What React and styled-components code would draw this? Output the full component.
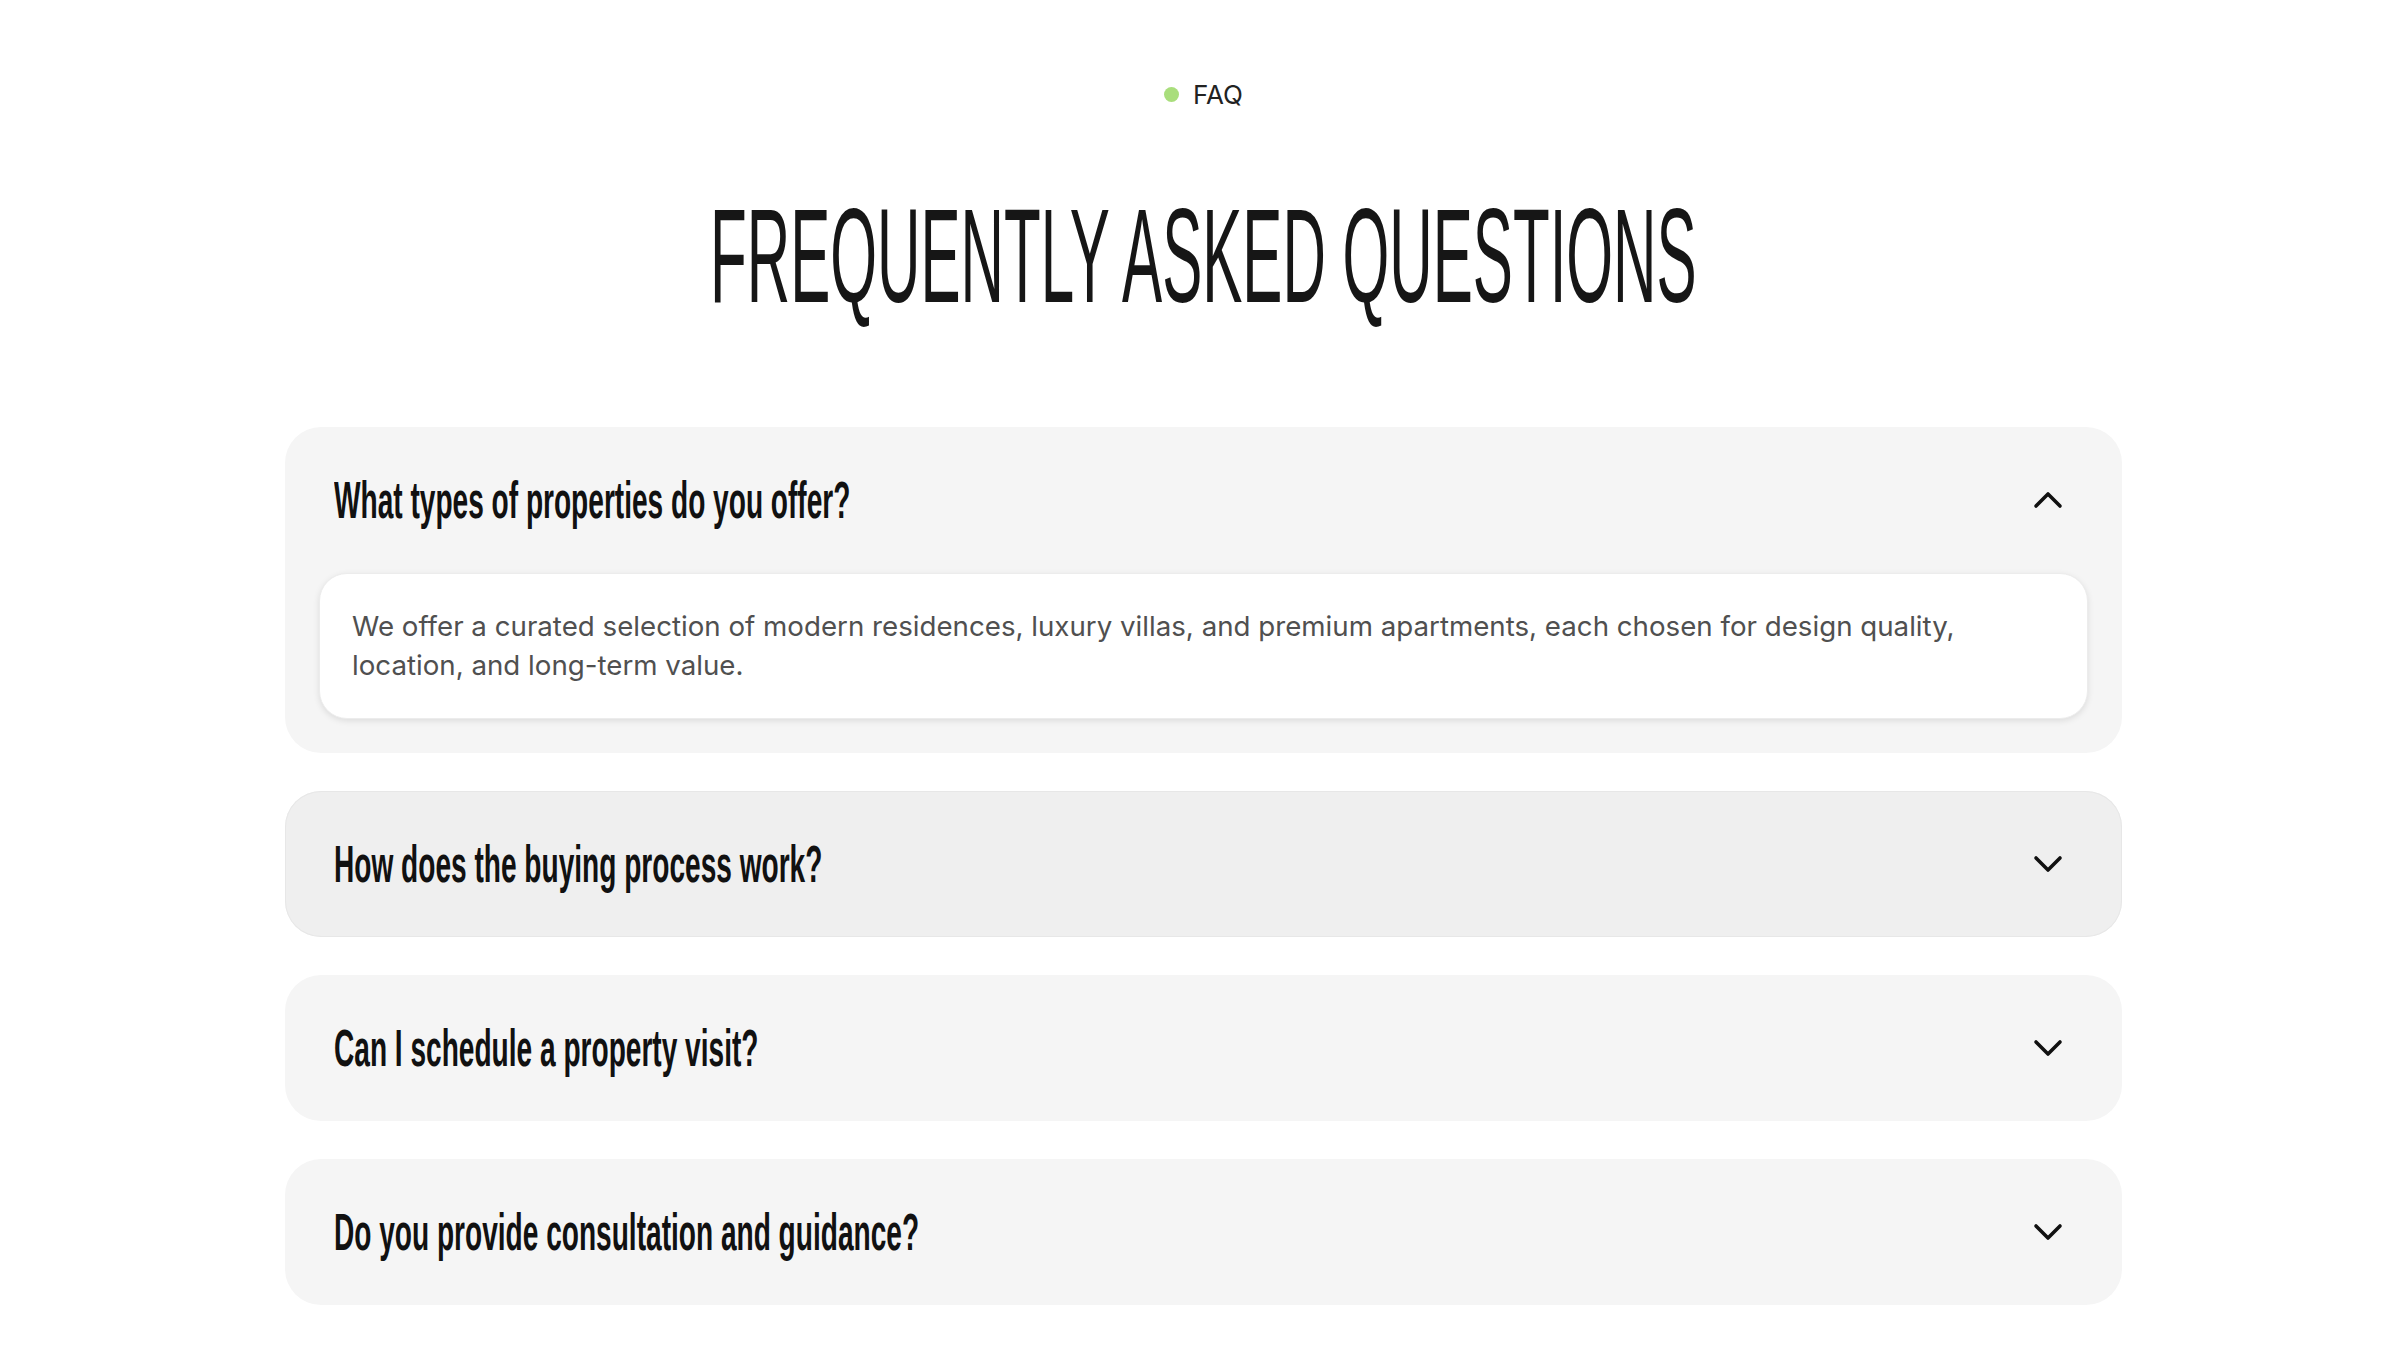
import React, { useState } from "react";
import styled, { createGlobalStyle } from "styled-components";
import { ChevronDown, ChevronUp } from "lucide-react";

const GlobalStyle = createGlobalStyle`
  html, body {
    margin: 0;
    padding: 0;
    background: #ffffff;
  }
  body {
    font-family: Inter, "Liberation Sans", sans-serif;
    color: #1a1a1a;
  }
`;

const Section = styled.section`
  padding: 78px 0 45px;
  display: flex;
  flex-direction: column;
  align-items: center;
`;

const Label = styled.div`
  display: flex;
  align-items: center;
  gap: 14px;
  height: 32px;
  font-family: Inter, "Liberation Sans", sans-serif;
  font-size: 26px;
  color: #222222;
`;

const Dot = styled.span`
  width: 15px;
  height: 15px;
  border-radius: 50%;
  background: #a9de7c;
`;

const Heading = styled.h2`
  margin: 80px 0 0;
  height: 133px;
  display: flex;
  justify-content: center;
  font-family: "Liberation Sans", Arial, sans-serif;
  font-weight: 400;
  font-size: 133px;
  line-height: 133px;
  color: #161616;
  white-space: nowrap;
`;

const Squeezed = styled.span`
  display: inline-block;
  transform: scaleX(${(p) => p.$scale});
  transform-origin: ${(p) => p.$origin || "center"};
`;

const List = styled.div`
  width: 1837px;
  margin-top: 104px;
  display: flex;
  flex-direction: column;
  gap: 38px;
`;

const Card = styled.div`
  background: ${(p) => (p.$hover ? "#efefef" : "#f5f5f5")};
  box-shadow: ${(p) => (p.$hover ? "inset 0 0 0 1px #e7e7e7" : "none")};
  border-radius: 36px;
  padding-bottom: ${(p) => (p.$open ? "34px" : "0")};
`;

const Header = styled.button`
  width: 100%;
  height: 146px;
  display: flex;
  align-items: center;
  justify-content: space-between;
  padding: 0 50px 0 49px;
  background: none;
  border: none;
  cursor: pointer;
  color: #111111;
`;

const Question = styled.span`
  font-family: "Liberation Sans", Arial, sans-serif;
  font-weight: 700;
  font-size: 52px;
  line-height: 60px;
  color: #111111;
  white-space: nowrap;
`;

const Answer = styled.div`
  margin: 0 34px;
  padding: 33px 32px;
  background: #ffffff;
  border: 1px solid #ececec;
  border-radius: 28px;
  box-shadow: 0 2px 6px rgba(0, 0, 0, 0.1);
  font-family: Inter, "Liberation Sans", sans-serif;
  font-size: 27.7px;
  line-height: 39px;
  color: #505050;
`;

const faqs = [
  {
    q: "What types of properties do you offer?",
    a: "We offer a curated selection of modern residences, luxury villas, and premium apartments, each chosen for design quality, location, and long-term value.",
  },
  {
    q: "How does the buying process work?",
    a: "Our advisors guide you from the first viewing to the final signature, handling paperwork, negotiations, and due diligence.",
  },
  {
    q: "Can I schedule a property visit?",
    a: "Yes. Book a private visit online or through our team at a time that suits you.",
  },
  {
    q: "Do you provide consultation and guidance?",
    a: "We provide personal consultation on market trends, financing options, and investment potential.",
  },
];

export default function App() {
  const [open, setOpen] = useState(0);

  return (
    <>
      <GlobalStyle />
      <Section>
        <Label>
          <Dot />
          FAQ
        </Label>
        <Heading>
          <Squeezed $scale={0.452}>FREQUENTLY ASKED QUESTIONS</Squeezed>
        </Heading>
        <List>
          {faqs.map((item, i) => {
            const isOpen = open === i;
            return (
              <Card key={item.q} $open={isOpen} $hover={i === 1}>
                <Header onClick={() => setOpen(isOpen ? -1 : i)}>
                  <Question>
                    <Squeezed $scale={0.54} $origin="left center">
                      {item.q}
                    </Squeezed>
                  </Question>
                  {isOpen ? (
                    <ChevronUp size={48} strokeWidth={1.8} />
                  ) : (
                    <ChevronDown size={48} strokeWidth={1.8} />
                  )}
                </Header>
                {isOpen && <Answer>{item.a}</Answer>}
              </Card>
            );
          })}
        </List>
      </Section>
    </>
  );
}
